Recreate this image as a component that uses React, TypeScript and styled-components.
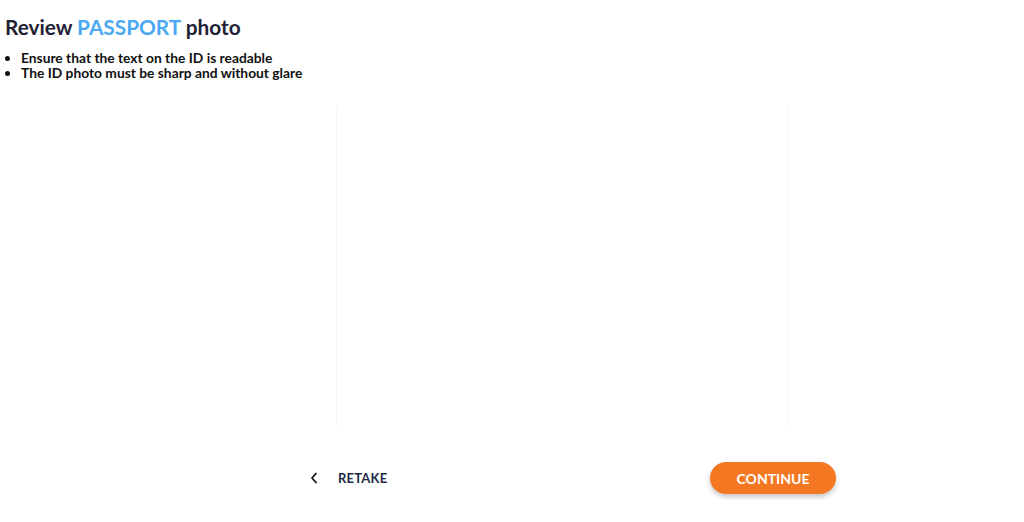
import React from "react";
import styled, { createGlobalStyle } from "styled-components";

const GlobalStyle = createGlobalStyle`
  html, body {
    margin: 0;
    padding: 0;
    background: #ffffff;
    font-family: "Lato", "Liberation Sans", sans-serif;
  }
`;

const Page = styled.div`
  width: 1024px;
  height: 522px;
  display: flex;
  flex-direction: column;
  overflow: hidden;
`;

const Header = styled.header`
  padding: 14px 0 0 5px;
`;

const Title = styled.h1`
  margin: 0;
  font-size: 20.8px;
  line-height: 26px;
  font-weight: 700;
  color: #1e2233;
`;

const Doc = styled.span`
  color: #4aa9f2;
`;

const Tips = styled.ul`
  margin: 10px 0 0 0;
  padding: 0 0 0 16px;
  font-size: 13.8px;
  line-height: 15px;
  font-weight: 700;
  color: #111111;
`;

const Tip = styled.li`
  padding-left: 0;
`;

const Body = styled.div`
  display: flex;
  flex-direction: column;
  width: 526px;
  margin: 27px 0 0 310px;
`;

const Preview = styled.div`
  width: 452px;
  height: 320px;
  margin-left: 26px;
  box-sizing: border-box;
  border-left: 1px solid #f5f5f5;
  border-right: 1px solid #f5f5f5;
`;

const Actions = styled.div`
  display: flex;
  align-items: center;
  justify-content: space-between;
  margin-top: 35px;
`;

const BackButton = styled.button`
  display: flex;
  align-items: center;
  gap: 20px;
  padding: 0;
  border: none;
  background: none;
  font-family: inherit;
  font-size: 13px;
  font-weight: 700;
  letter-spacing: 0.2px;
  color: #1e2a46;
  cursor: pointer;
`;

const ContinueButton = styled.button`
  width: 126px;
  height: 32px;
  border: none;
  border-radius: 16px;
  background: #f47822;
  color: #ffffff;
  font-family: inherit;
  font-size: 14px;
  font-weight: 700;
  box-shadow: 0 3px 5px rgba(0, 0, 0, 0.22);
  cursor: pointer;
`;

const Chevron = () => (
  <svg width="8" height="12" viewBox="0 0 8 12" fill="none">
    <path d="M6 1.5 L2 6 L6 10.5" stroke="#111" strokeWidth="1.8" strokeLinecap="round" strokeLinejoin="round" />
  </svg>
);

export default function App() {
  return (
    <Page>
      <GlobalStyle />
      <Header>
        <Title>
          Review <Doc>PASSPORT</Doc> photo
        </Title>
        <Tips>
          <Tip>Ensure that the text on the ID is readable</Tip>
          <Tip>The ID photo must be sharp and without glare</Tip>
        </Tips>
      </Header>
      <Body>
        <Preview />
        <Actions>
          <BackButton>
            <Chevron />
            RETAKE
          </BackButton>
          <ContinueButton>CONTINUE</ContinueButton>
        </Actions>
      </Body>
    </Page>
  );
}
